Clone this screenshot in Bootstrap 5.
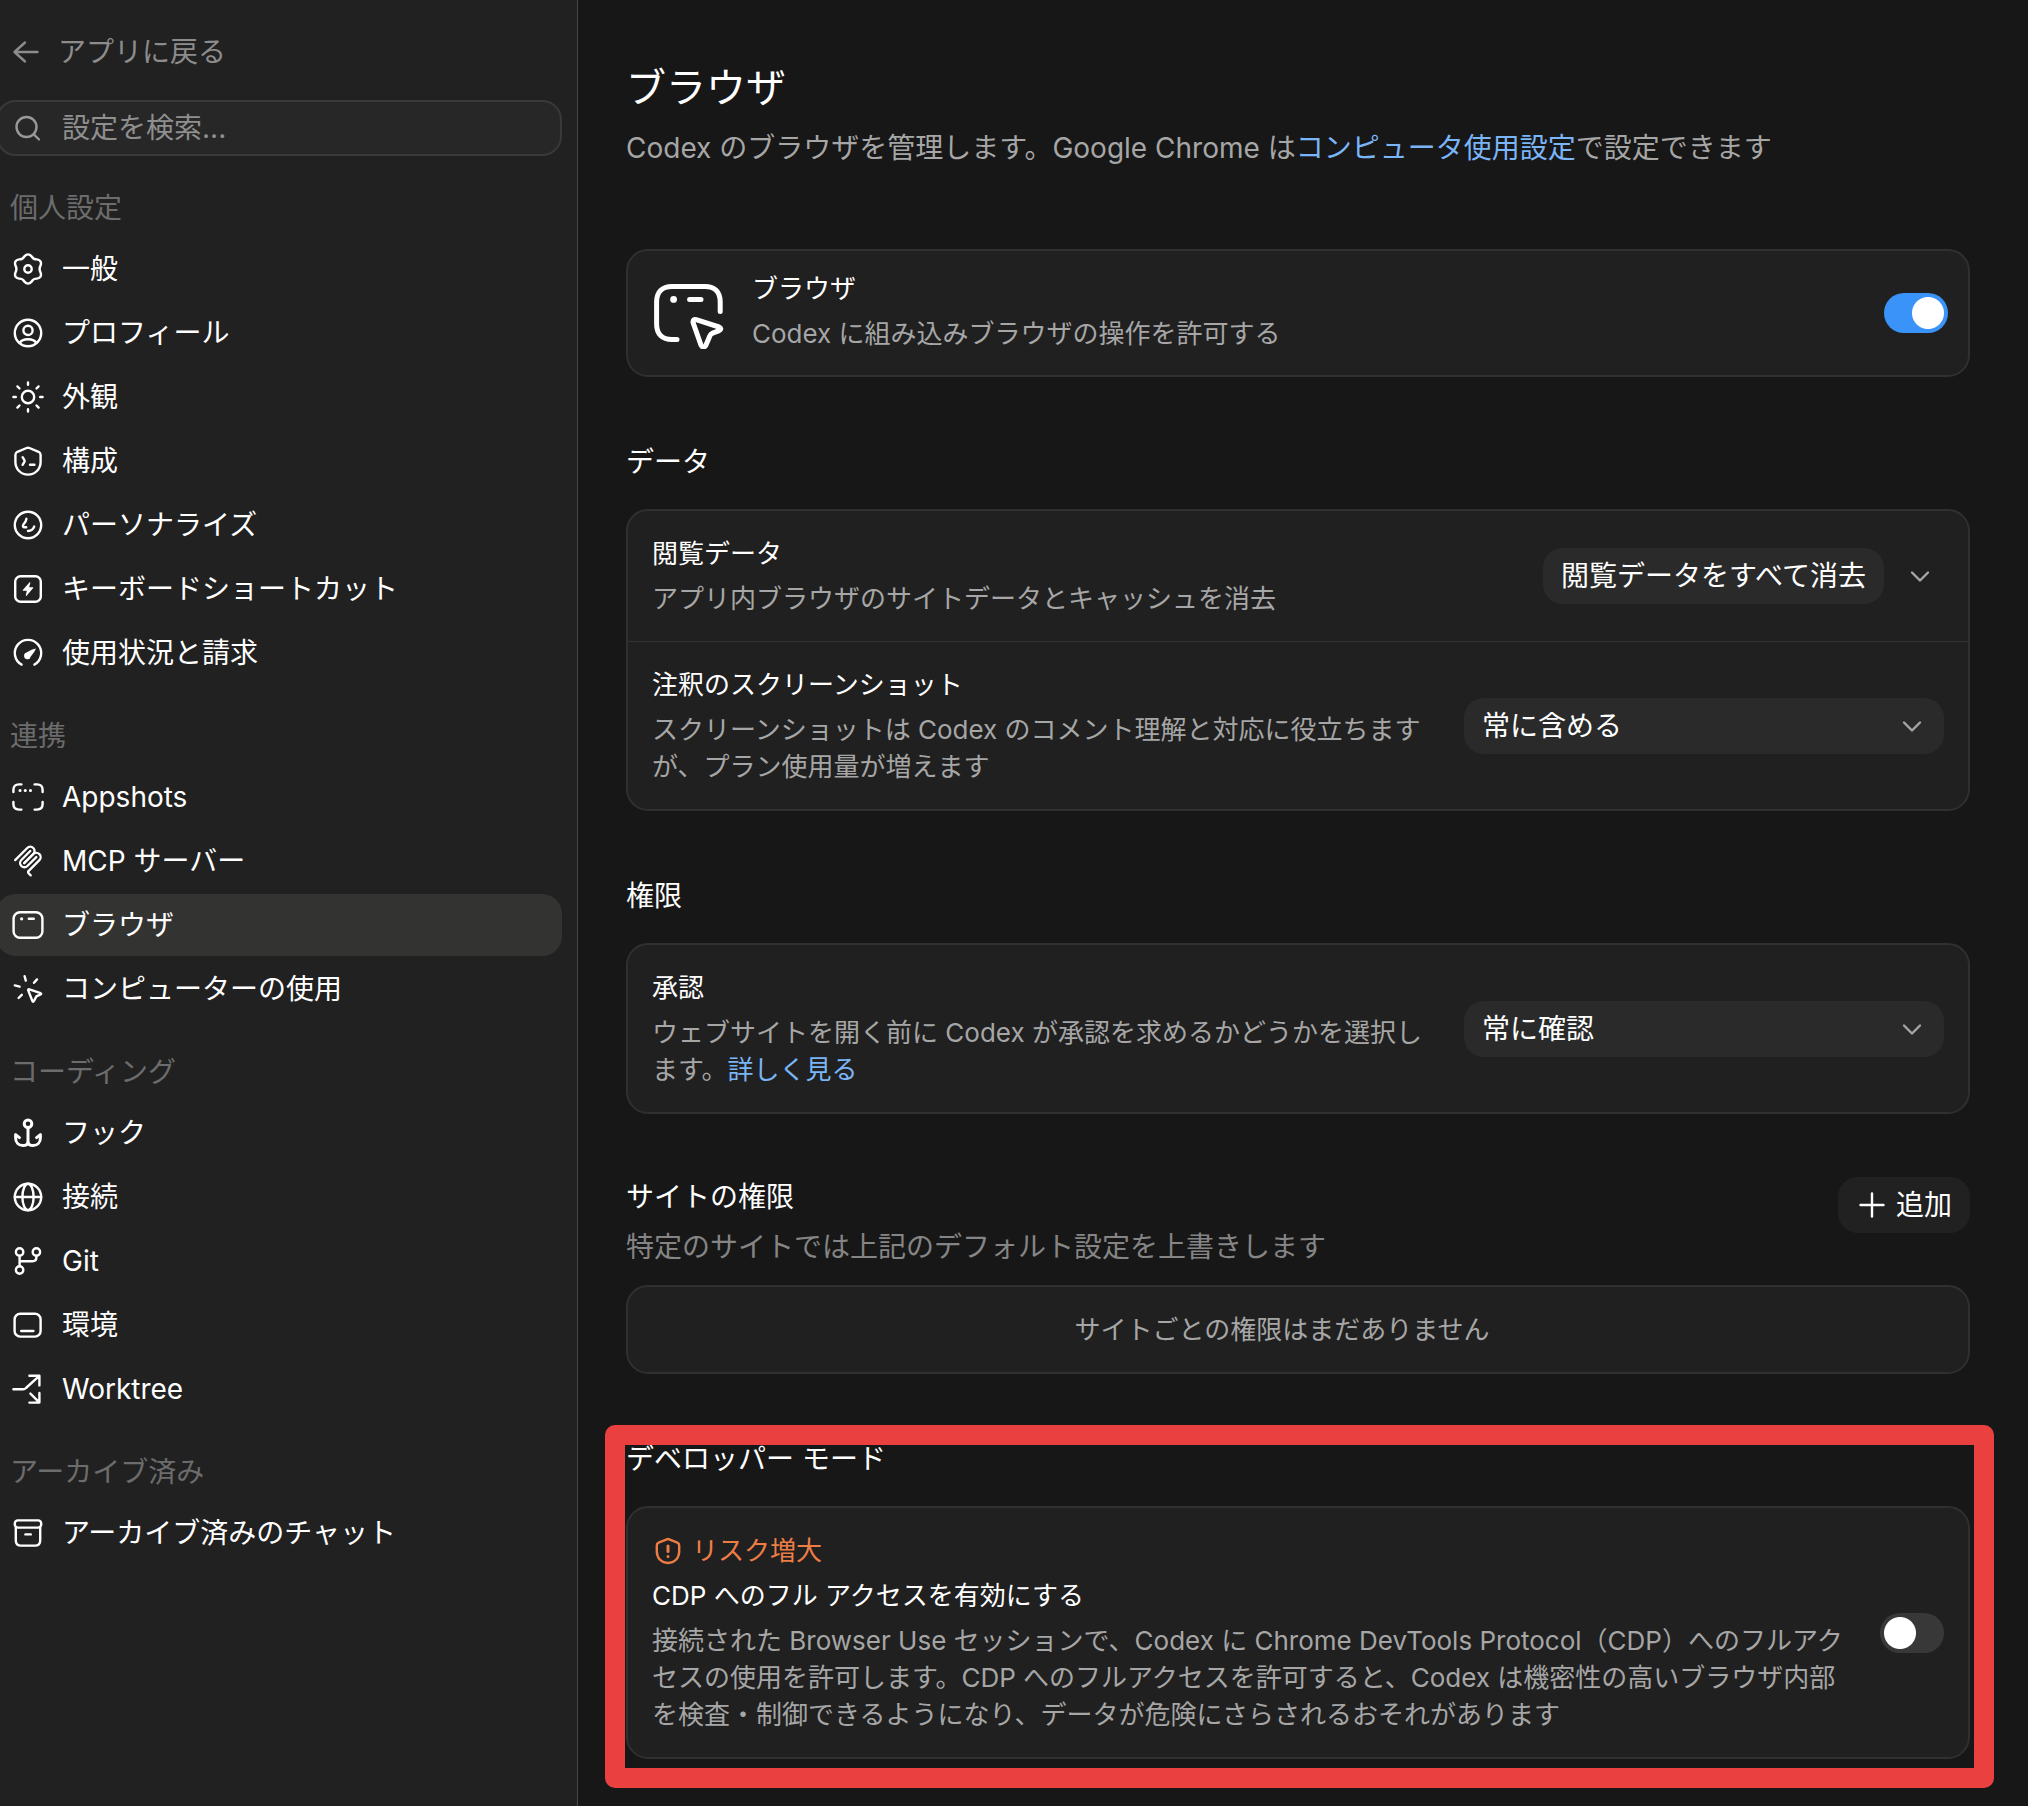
<!DOCTYPE html>
<html lang="ja">
<head>
<meta charset="utf-8">
<meta name="viewport" content="width=device-width, initial-scale=1">
<title>ブラウザ</title>
<link href="https://cdn.jsdelivr.net/npm/bootstrap@5.3.0/dist/css/bootstrap.min.css" rel="stylesheet">
<style>
  body { background: #171717; color: #fff; font-family: Inter, "Noto Sans CJK JP", sans-serif; font-size: 28px; line-height: 40px; }
  svg { fill: none; stroke: currentColor; stroke-width: 2.4; stroke-linecap: round; stroke-linejoin: round; flex: none; }
  a { color: #7ab5f8; text-decoration: none; }
  .ico { width: 32px; height: 32px; }
  .solid { fill: currentColor; stroke: none; }

  .side-pane { width: 578px; flex: none; background: #212121; border-right: 1px solid #484848; padding: 30px 15px 30px 0; overflow: hidden; }
  .side-inner { margin-left: -4px; }
  .back-link { color: #8c8c8c; gap: 14px; height: 44px; padding-left: 16px; margin-bottom: 26px; }
  .search-box { height: 56px; border: 2px solid #393938; border-radius: 20px; background: #272727; color: #989898; padding-left: 14px; gap: 18px; }
  .search-box input, .search-box input:focus { background: none; border: 0; box-shadow: none; color: #fff; font-size: 28px; line-height: 40px; padding: 0; }
  .search-box input::placeholder { color: #8f8f8f; opacity: 1; }
  .group-label { color: #6c6c6c; font-size: 28px; line-height: 60px; font-weight: 400; padding-left: 14px; margin: 22px 0 0; }
  .side-nav { gap: 2px; }
  .side-nav .nav-link { height: 62px; padding: 0 16px; gap: 18px; color: #fff; border-radius: 20px; }
  .side-nav .nav-link.active { background: #333332; }

  .main-pane { padding: 60px 58px 40px 48px; min-width: 0; }
  .page-title { font-size: 40px; line-height: 56px; font-weight: 400; margin-bottom: 12px; }
  .page-lead { color: #a6a6a6; margin-bottom: 81px; }
  .block { margin-top: 65px; position: relative; }
  .site-block { margin-top: 63px; }
  .block-title { font-size: 28px; line-height: 40px; font-weight: 400; margin-bottom: 27px; }
  .panel { background: #202020; border: 2px solid #303030; border-radius: 22px; font-size: 26px; line-height: 37px; }
  .panel-row { padding: 24px; gap: 24px; }
  .panel-row + .panel-row { border-top: 1px solid #323232; }
  .row-title { font-size: 26px; line-height: 37px; font-weight: 400; margin-bottom: 8px; }
  .row-text { color: #a6a6a6; margin: 0; }
  .intro-row { padding: 16px 20px 16px 24px; gap: 28px; min-height: 124px; }
  .big-ico { width: 72px; height: 72px; stroke-width: 5; }

  .actions { gap: 12px; }
  .soft-btn { background: #2a2a2a; color: #fff; border: 0; border-radius: 20px; font-size: 28px; line-height: 40px; padding: 8px 18px; }
  .soft-btn:hover { background: #333; color: #fff; }
  .soft-btn.add { background: #212121; gap: 8px; }
  .ghost-btn { background: none; border: 0; color: #a6a6a6; width: 48px; height: 56px; padding: 0; }
  .chev { width: 24px; height: 24px; color: #a6a6a6; }
  .picker { width: 480px; flex: none; position: relative; }
  .picker select { height: 56px; background: #2a2a2a; border: 0; border-radius: 20px; color: #fff; font-size: 28px; line-height: 40px; padding: 8px 60px 8px 18px; }
  .picker .chev { position: absolute; right: 20px; top: 16px; pointer-events: none; }

  .toggle { min-height: 40px; padding: 0; margin: 0; flex: none; }
  .toggle .form-check-input { width: 64px; height: 40px; margin: 0; float: none; display: block; border: 0; border-radius: 20px; background: radial-gradient(circle at 20px 20px, #fff 15.5px, #383838 16.5px); }
  .toggle .form-check-input:checked { background: radial-gradient(circle at 44px 20px, #fff 15.5px, #3993f8 16.5px); }

  .site-text { color: #858585; margin: 10px 0 18px; }
  .empty-note { color: #a6a6a6; text-align: center; padding: 24px 56px 24px 24px; margin: 0; }
  .risk { color: #ee7d45; gap: 8px; margin-bottom: 8px; }
  .red-frame { position: absolute; inset: -14px -24px -29px -21px; border: 20px solid #eb4040; border-radius: 10px; pointer-events: none; }
</style>
</head>
<body>
<div class="d-flex min-vh-100">

  <aside class="side-pane">
    <div class="side-inner">
      <a href="#" class="back-link d-flex align-items-center">
        <svg class="ico" viewBox="0 0 32 32"><path d="M2.5 16H25.5M13 6.5 2.5 16 13 25.5"/></svg>
        <span>アプリに戻る</span>
      </a>
      <label class="search-box d-flex align-items-center">
        <svg class="ico" viewBox="0 0 32 32"><circle cx="14.5" cy="15" r="10"/><path d="M21.8 22.3 27 27.5"/></svg>
        <input type="search" class="form-control" placeholder="設定を検索..." aria-label="設定を検索">
      </label>

      <h2 class="group-label">個人設定</h2>
      <nav class="nav flex-column side-nav">
        <a href="#" class="nav-link d-flex align-items-center"><svg class="ico" viewBox="0 0 32 32"><path d="M12.4 3.4Q16 -.6 19.6 3.4Q21.2 6.6 25 6.4Q30.2 7.4 28.6 12.4Q26.6 16 28.6 19.6Q30.2 24.6 25 25.6Q21.2 25.4 19.6 28.6Q16 32.6 12.4 28.6Q10.8 25.4 7 25.6Q1.8 24.6 3.4 19.6Q5.4 16 3.4 12.4Q1.8 7.4 7 6.4Q10.8 6.6 12.4 3.4Z"/><circle cx="16" cy="16" r="3.7"/></svg>一般</a>
        <a href="#" class="nav-link d-flex align-items-center"><svg class="ico" viewBox="0 0 32 32"><circle cx="16" cy="16" r="13.2"/><circle cx="16" cy="13.4" r="4.6"/><path d="M7.8 26C10 20.9 22 20.9 24.2 26"/></svg>プロフィール</a>
        <a href="#" class="nav-link d-flex align-items-center"><svg class="ico" viewBox="0 0 32 32"><circle cx="16" cy="16" r="6.2"/><path d="M16 1.4V3.8M16 28.2V30.6M1.4 16H3.8M28.2 16H30.6M5.4 5.4 7.5 7.5M24.5 24.5 26.6 26.6M5.4 26.6 7.5 24.5M24.5 7.5 26.6 5.4"/></svg>外観</a>
        <a href="#" class="nav-link d-flex align-items-center"><svg class="ico" viewBox="0 0 32 32"><path d="M14.6 3Q16 2.4 17.4 3L26.6 6.8Q28.6 7.8 28.6 10V17C28.6 24.2 23 29.6 16 29.6S3.4 24.2 3.4 17V10Q3.4 7.8 5.4 6.8Z"/><path d="M10.6 12.2 12.4 15.2Q12.9 16 12.4 16.8L10.6 19.8M18 19.8H22.4"/></svg>構成</a>
        <a href="#" class="nav-link d-flex align-items-center"><svg class="ico" viewBox="0 0 32 32"><circle cx="16" cy="16" r="13.2"/><path d="M14.4 9.8Q14.2 12.2 11.6 15.2Q9.8 18.2 12.8 18.3H14.2M16 22Q20.6 21.8 22.2 17.6"/></svg>パーソナライズ</a>
        <a href="#" class="nav-link d-flex align-items-center"><svg class="ico" viewBox="0 0 32 32"><rect x="3.2" y="3.2" width="25.6" height="25.6" rx="5.4"/><path class="solid" d="M17.6 9.2 10.8 17Q10.4 17.8 11.2 17.8H14.8L13.8 22.6Q14 23.4 14.6 22.8L21.2 15Q21.6 14.2 20.8 14.2H17.2L18.4 9.6Q18.2 8.8 17.6 9.2Z"/></svg>キーボードショートカット</a>
        <a href="#" class="nav-link d-flex align-items-center"><svg class="ico" viewBox="0 0 32 32"><path d="M9.6 27.6A13.2 13.2 0 1 1 22.4 27.6"/><path class="solid" d="M24 11.6Q20 12 14.6 15.6A3.4 3.4 0 1 0 18.8 19.6Q22.6 15.4 24 11.6Z"/></svg>使用状況と請求</a>
      </nav>

      <h2 class="group-label">連携</h2>
      <nav class="nav flex-column side-nav">
        <a href="#" class="nav-link d-flex align-items-center"><svg class="ico" viewBox="0 0 32 32"><path d="M1.4 11V9Q1.4 3.4 7 3.4H9.4M22.6 3.4H25Q30.6 3.4 30.6 9V11M30.6 21V23Q30.6 28.6 25 28.6H22.6M9.4 28.6H7Q1.4 28.6 1.4 23V21"/><path d="M8 9.6H8.1M13.2 9.6H13.3M18.4 9.6H18.5" stroke-width="3"/></svg>Appshots</a>
        <a href="#" class="nav-link d-flex align-items-center"><svg class="ico" viewBox="0 0 180 180"><g stroke-width="13"><path d="M18 84.85 85.88 16.97C95.25 7.6 110.45 7.6 119.82 16.97S129.2 41.54 119.82 50.91L68.56 102.18"/><path d="M69.27 101.47 119.82 50.91C129.2 41.54 144.39 41.54 153.77 50.91L154.12 51.27C163.49 60.64 163.49 75.83 154.12 85.21L92.72 146.6C89.6 149.72 89.6 154.79 92.72 157.91L105.33 170.52"/><path d="M102.85 33.94 52.65 84.15C43.28 93.52 43.28 108.71 52.65 118.09S77.22 127.46 86.59 118.09L136.79 67.88"/></g></svg>MCP サーバー</a>
        <a href="#" class="nav-link active d-flex align-items-center" aria-current="page"><svg class="ico" viewBox="0 0 32 32"><rect x="1.6" y="3.2" width="28.8" height="25.6" rx="6.4"/><path d="M16.8 9.8H21.8"/><circle class="solid" cx="9.6" cy="9.8" r="1.6"/></svg>ブラウザ</a>
        <a href="#" class="nav-link d-flex align-items-center"><svg class="ico" viewBox="0 0 32 32"><path d="M12.6 3.2 13.8 7.6M25 6.4 22 9.8M2.8 12.4 7.6 13.6M6.6 25 9.8 21.8M16.2 17.4Q16 16 17.4 16.4L28.6 20.2Q29.8 20.8 28.6 21.4L24.4 23.4L21.8 28.2Q21 29.4 20.4 28Z"/></svg>コンピューターの使用</a>
      </nav>

      <h2 class="group-label">コーディング</h2>
      <nav class="nav flex-column side-nav">
        <a href="#" class="nav-link d-flex align-items-center"><svg class="ico" viewBox="0 0 32 32"><g stroke-width="3"><circle cx="16" cy="6.8" r="3.8"/><path d="M16 10.8V24.2C16 27.2 13.8 28.6 10.8 28.6C6.4 28.6 3.6 25.2 3.6 20.8V17.6L7.4 20.6M16 24.2C16 27.2 18.2 28.6 21.2 28.6C25.6 28.6 28.4 25.2 28.4 20.8V17.6L24.6 20.6"/></g></svg>フック</a>
        <a href="#" class="nav-link d-flex align-items-center"><svg class="ico" viewBox="0 0 32 32"><circle cx="16" cy="16" r="13.2"/><ellipse cx="16" cy="16" rx="5.6" ry="13.2"/><path d="M2.8 16H29.2"/></svg>接続</a>
        <a href="#" class="nav-link d-flex align-items-center"><svg class="ico" viewBox="0 0 32 32"><circle cx="7.6" cy="7" r="3.7"/><circle cx="24.4" cy="7" r="3.7"/><circle cx="7.6" cy="25" r="3.7"/><path d="M7.6 10.7V21.3M24.4 10.7V12.2Q24.4 16.2 20.4 16.2H7.6"/></svg>Git</a>
        <a href="#" class="nav-link d-flex align-items-center"><svg class="ico" viewBox="0 0 32 32"><rect x="2.6" y="4.8" width="26" height="22.8" rx="5.6"/><path d="M9.2 22H21.4"/></svg>環境</a>
        <a href="#" class="nav-link d-flex align-items-center"><svg class="ico" viewBox="0 0 32 32"><path d="M1.4 16.2H11Q12.8 16.2 14 15L27 3.2M17.4 2.8H27.4V12.4M18.4 20.6 27 29.2M17.4 29.6H27.4V20"/></svg>Worktree</a>
      </nav>

      <h2 class="group-label">アーカイブ済み</h2>
      <nav class="nav flex-column side-nav">
        <a href="#" class="nav-link d-flex align-items-center"><svg class="ico" viewBox="0 0 32 32"><rect x="2.8" y="3.4" width="26.4" height="7.2" rx="3"/><path d="M3.8 10.6V23.4Q3.8 28.6 9 28.6H23Q28.2 28.6 28.2 23.4V10.6M13.4 17.4H18.8"/></svg>アーカイブ済みのチャット</a>
      </nav>
    </div>
  </aside>

  <main class="main-pane flex-grow-1">
    <h1 class="page-title">ブラウザ</h1>
    <p class="page-lead">Codex のブラウザを管理します。Google Chrome は<a href="#">コンピュータ使用設定</a>で設定できます</p>

    <section class="panel">
      <div class="intro-row d-flex align-items-center">
        <svg class="big-ico" viewBox="0 0 72 72"><path d="M25 62.4H20C10 62.4 4.6 57 4.6 47V25C4.6 15 10 9.6 20 9.6H53C63 9.6 68.2 15 68.2 25V34.6M37.6 22.4H49M41 45.4Q40.8 41.6 44.2 42.6L67 50Q70.6 51.8 67.2 53.6L60.6 56.2Q58.6 57 57.8 59L53.8 68.4Q51 72 49 68.2Z"/><circle class="solid" cx="21.6" cy="22.4" r="3.4"/></svg>
        <div class="flex-grow-1 pb-1">
          <h2 class="row-title" id="t-browser">ブラウザ</h2>
          <p class="row-text">Codex に組み込みブラウザの操作を許可する</p>
        </div>
        <div class="form-check form-switch toggle"><input class="form-check-input" type="checkbox" role="switch" aria-labelledby="t-browser" checked></div>
      </div>
    </section>

    <section class="block">
      <h2 class="block-title">データ</h2>
      <div class="panel">
        <div class="panel-row d-flex align-items-center">
          <div class="flex-grow-1">
            <h3 class="row-title">閲覧データ</h3>
            <p class="row-text">アプリ内ブラウザのサイトデータとキャッシュを消去</p>
          </div>
          <div class="actions d-flex">
            <button type="button" class="btn soft-btn">閲覧データをすべて消去</button>
            <button type="button" class="btn ghost-btn d-flex align-items-center justify-content-center" aria-label="その他"><svg class="chev" viewBox="0 0 24 24"><path d="M4 8.5 12 16.5 20 8.5"/></svg></button>
          </div>
        </div>
        <div class="panel-row d-flex align-items-center">
          <div class="flex-grow-1">
            <h3 class="row-title"><label for="shots">注釈のスクリーンショット</label></h3>
            <p class="row-text">スクリーンショットは Codex のコメント理解と対応に役立ちますが、プラン使用量が増えます</p>
          </div>
          <div class="picker">
            <select class="form-select" id="shots"><option>常に含める</option></select>
            <svg class="chev" viewBox="0 0 24 24"><path d="M4 8.5 12 16.5 20 8.5"/></svg>
          </div>
        </div>
      </div>
    </section>

    <section class="block">
      <h2 class="block-title">権限</h2>
      <div class="panel">
        <div class="panel-row d-flex align-items-center">
          <div class="flex-grow-1">
            <h3 class="row-title"><label for="approve">承認</label></h3>
            <p class="row-text">ウェブサイトを開く前に Codex が承認を求めるかどうかを選択します。<a href="#">詳しく見る</a></p>
          </div>
          <div class="picker">
            <select class="form-select" id="approve"><option>常に確認</option></select>
            <svg class="chev" viewBox="0 0 24 24"><path d="M4 8.5 12 16.5 20 8.5"/></svg>
          </div>
        </div>
      </div>
    </section>

    <section class="block site-block">
      <div class="d-flex justify-content-between align-items-start">
        <div>
          <h2 class="block-title mb-0">サイトの権限</h2>
          <p class="site-text">特定のサイトでは上記のデフォルト設定を上書きします</p>
        </div>
        <button type="button" class="btn soft-btn add d-flex align-items-center"><svg class="ico" viewBox="0 0 32 32"><path d="M16 4.5V27.5M4.5 16H27.5"/></svg>追加</button>
      </div>
      <div class="panel">
        <p class="empty-note">サイトごとの権限はまだありません</p>
      </div>
    </section>

    <section class="block">
      <h2 class="block-title">デベロッパー モード</h2>
      <div class="panel">
        <div class="panel-row d-flex align-items-center">
          <div class="flex-grow-1">
            <div class="risk d-flex align-items-center"><svg class="ico" viewBox="0 0 32 32"><path d="M14.8 4.3Q16 3.8 17.2 4.3L25.4 7.6Q27.2 8.4 27.2 10.4V16.6C27.2 23.2 22.4 28 16 28S4.8 23.2 4.8 16.6V10.4Q4.8 8.4 6.6 7.6Z"/><path d="M16 11V16.4M16 21.4V21.5" stroke-width="3"/></svg>リスク増大</div>
            <h3 class="row-title" id="t-cdp">CDP へのフル アクセスを有効にする</h3>
            <p class="row-text">接続された Browser Use セッションで、Codex に Chrome DevTools Protocol（CDP）へのフルアクセスの使用を許可します。CDP へのフルアクセスを許可すると、Codex は機密性の高いブラウザ内部を検査・制御できるようになり、データが危険にさらされるおそれがあります</p>
          </div>
          <div class="form-check form-switch toggle"><input class="form-check-input" type="checkbox" role="switch" aria-labelledby="t-cdp"></div>
        </div>
      </div>
      <div class="red-frame"></div>
    </section>
  </main>
</div>
<script src="https://cdn.jsdelivr.net/npm/bootstrap@5.3.0/dist/js/bootstrap.bundle.min.js"></script>
</body>
</html>
